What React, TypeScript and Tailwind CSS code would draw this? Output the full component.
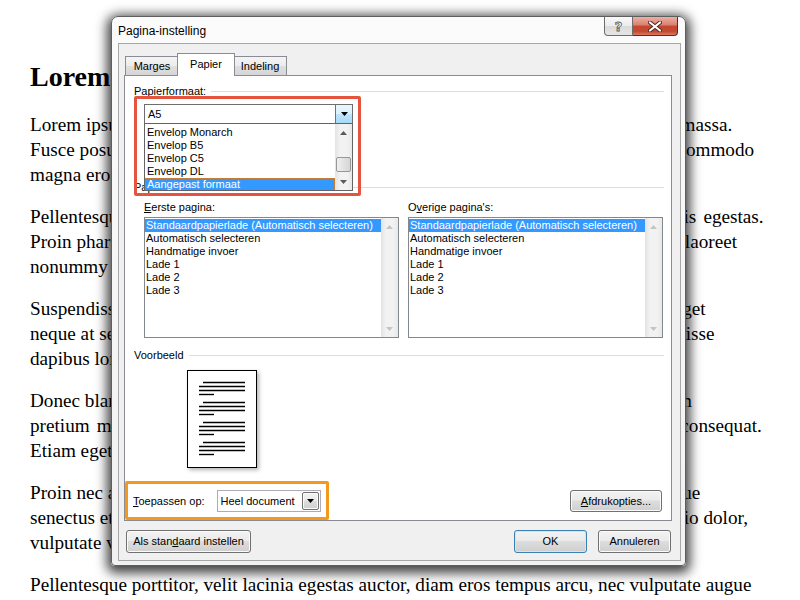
import React from "react";

// body text behind the dialog, one entry per rendered line
const paragraphs: string[][] = [
  [
    "Lorem ipsum dolor sit amet, consectetuer adipiscing elit. Maecenas porttitor congue massa.",
    "Fusce posuere, magna sed pulvinar ultricies, purus lectus malesuada libero, sit amet commodo",
    "magna eros quis urna.",
  ],
  [
    "Pellentesque habitant morbi tristique senectus et netus et malesuada fames ac turpis egestas.",
    "Proin pharetra nonummy pede. Mauris et orci. Aenean nec lorem. In porttitor. Donec laoreet",
    "nonummy augue.",
  ],
  [
    "Suspendisse dui purus, scelerisque at, vulputate vitae, pretium mattis, nunc. Mauris eget",
    "neque at sem venenatis eleifend. Ut nonummy. Fusce aliquet pede non pede. Suspendisse",
    "dapibus lorem pellentesque magna. Integer nulla.",
  ],
  [
    "Donec blandit feugiat ligula. Donec hendrerit, felis et imperdiet euismod, purus ipsum",
    "pretium metus, in lacinia nulla nisl eget sapien. Donec ut est in lectus consequat consequat.",
    "Etiam eget dui. Aliquam erat volutpat. Sed at lorem in nunc porta tristique.",
  ],
  [
    "Proin nec augue. Quisque aliquam tempor magna. Pellentesque habitant morbi tristique",
    "senectus et netus et malesuada fames ac turpis egestas. Nunc ac magna. Maecenas odio dolor,",
    "vulputate vel, auctor ac, accumsan id, felis. Pellentesque cursus sagittis felis.",
  ],
  ["Pellentesque porttitor, velit lacinia egestas auctor, diam eros tempus arcu, nec vulputate augue"],
];

// lines that run a little wider than the rest
const loose = new Set([paragraphs[1][0], paragraphs[3][1]]);

const formats = ["Envelop Monarch", "Envelop B5", "Envelop C5", "Envelop DL", "Aangepast formaat"];
const trays = [
  "Standaardpapierlade (Automatisch selecteren)",
  "Automatisch selecteren",
  "Handmatige invoer",
  "Lade 1",
  "Lade 2",
  "Lade 3",
];

const btnFace =
  "bg-[linear-gradient(#f2f2f2,#ebebeb_45%,#dddddd_50%,#cfcfcf)] shadow-[inset_0_0_0_1px_#fbfbfb]";

const Arrow = ({ up = false, color = "#000" }: { up?: boolean; color?: string }) => (
  <svg width="7" height="4" viewBox="0 0 7 4">
    <path d={up ? "M0 4h7L3.5 0z" : "M0 0h7L3.5 4z"} fill={color} />
  </svg>
);

const ScrollBar = ({ enabled }: { enabled?: boolean }) => (
  <div className="flex w-[17px] shrink-0 flex-col bg-[linear-gradient(90deg,#e3e3e3,#f2f2f2_30%,#f2f2f2_70%,#e8e8e8)]">
    <div className="flex h-[17px] items-center justify-center">
      <Arrow up color={enabled ? "#5a5a5a" : "#c4c4c4"} />
    </div>
    <div className="flex-1 px-px">
      {enabled && (
        <div className="mt-[16px] h-[15px] rounded-[2px] border border-[#979797] bg-[linear-gradient(90deg,#f0f0f0,#e2e2e2_50%,#d6d6d6)]" />
      )}
    </div>
    <div className="flex h-[17px] items-center justify-center">
      <Arrow color={enabled ? "#5a5a5a" : "#c4c4c4"} />
    </div>
  </div>
);

const GroupHeader = ({ children, className = "" }: { children: React.ReactNode; className?: string }) => (
  <div className={`flex items-center gap-[5px] pl-[9px] pr-[7px] ${className}`}>
    <span className="whitespace-nowrap">{children}</span>
    <div className="h-px flex-1 bg-[#d5dfe5]" />
  </div>
);

const TrayList = () => (
  <div className="flex h-[121px] w-[255px] border border-[#828790] bg-white">
    <div className="min-w-0 flex-1 overflow-hidden pt-px">
      {trays.map((t, i) => (
        <div
          key={t}
          className={`h-[13px] whitespace-nowrap pl-px leading-[13px] ${i === 0 ? "bg-[#3399ff] text-white" : ""}`}
        >
          {t}
        </div>
      ))}
    </div>
    <ScrollBar />
  </div>
);

const PagePreview = () => (
  <svg width="70" height="98" viewBox="0 0 70 98" className="shadow-[2px_2px_4px_rgba(0,0,0,0.3)]">
    <rect x="0.5" y="0.5" width="69" height="97" fill="#fff" stroke="#000" />
    {[12, 32, 52, 72].map((y) => (
      <g key={y} stroke="#000" strokeWidth="1.4">
        <line x1="16" x2="58" y1={y + 0.5} y2={y + 0.5} />
        <line x1="12" x2="58" y1={y + 4.5} y2={y + 4.5} />
        <line x1="12" x2="58" y1={y + 8.5} y2={y + 8.5} />
        <line x1="12" x2="27" y1={y + 12.5} y2={y + 12.5} />
      </g>
    ))}
  </svg>
);

const Tab = ({ label, active = false, className = "" }: { label: string; active?: boolean; className?: string }) =>
  active ? (
    <div className={`relative z-10 flex h-[23px] items-start justify-center border border-b-0 border-[#898c95] bg-white pt-[4px] ${className}`}>
      {label}
    </div>
  ) : (
    <div
      className={`flex h-[20px] items-center justify-center border border-[#898c95] bg-[linear-gradient(#f4f4f4,#ececec_50%,#dfdfdf_50%,#d6d6d6)] pt-px ${className}`}
    >
      {label}
    </div>
  );

function PageSetupDialog() {
  return (
    <div className="absolute left-[111px] top-[16px] flex h-[550px] w-[575px] flex-col rounded-t-[7px] rounded-b-[4px] border border-[#5e5e5e] bg-[linear-gradient(#fbfbfb,#f1f1f1)] font-['Liberation_Sans',sans-serif] text-[11px] leading-[13px] text-black shadow-[0_3px_12px_4px_rgba(0,0,0,0.75)]">
      {/* caption */}
      <div className="flex h-[26px] shrink-0 items-start">
        <span className="ml-[6px] mt-[8px] text-[12px]">Pagina-instelling</span>
        <div className="ml-auto mr-[7px] flex">
          <div className="flex h-[19px] w-[29px] items-center justify-center rounded-bl-[4px] border border-t-0 border-[#6d6d6d] bg-[linear-gradient(#f8f8f8,#ececec_50%,#dadada_50%,#e6e6e6)] font-['DejaVu_Sans',sans-serif] text-[13px] font-bold text-white [-webkit-text-stroke:0.8px_#555]">
            ?
          </div>
          <div className="flex h-[19px] w-[45px] items-center justify-center rounded-br-[4px] border border-l-0 border-t-0 border-[#5b2a22] bg-[linear-gradient(#eab0a4,#d9806f_45%,#c7472f_50%,#c24a33_80%,#dc7a5e)]">
            <svg width="14" height="11" viewBox="0 0 14 11">
              <path d="M2 1.5l10 8M12 1.5l-10 8" stroke="#4a2a25" strokeWidth="4" strokeLinecap="round" />
              <path d="M2 1.5l10 8M12 1.5l-10 8" stroke="#fff" strokeWidth="2.2" strokeLinecap="round" />
            </svg>
          </div>
        </div>
      </div>

      {/* client area */}
      <div className="mb-[4px] ml-[6px] mr-[4px] flex flex-1 flex-col border border-[#a7a7a7] bg-[#f0f0f0]">
        <div className="relative z-10 -mb-px mt-[9px] flex h-[23px] items-end pl-[6px]">
          <Tab label="Marges" className="w-[53px] border-r-0" />
          <Tab label="Papier" active className="-mx-px w-[58px]" />
          <Tab label="Indeling" className="w-[53px] border-l-0" />
        </div>

        <div className="ml-[5px] mr-[8px] flex flex-1 flex-col border border-[#898c95] bg-white">
          <GroupHeader className="mt-[9px]">
            Papier<u>f</u>ormaat:
          </GroupHeader>

          {/* paper size combo, opened */}
          <div className="relative z-20 mt-[6px] pl-[19px]">
            <div className="relative flex h-[20px] w-[209px] border border-[#6e6e6e] bg-white">
              <span className="flex-1 pl-[3px] leading-[18px]">A5</span>
              <div className="flex w-[17px] items-center justify-center border-l border-[#3c7fb1] bg-[linear-gradient(#eaf6fd,#d9f0fc_50%,#bee6fd_50%,#a7d9f5)]">
                <Arrow />
              </div>
              <div className="absolute left-[-1px] top-[18px] flex h-[68px] w-[209px] border border-[#646464] bg-white">
                <div className="min-w-0 flex-1 overflow-hidden pt-[2px]">
                  {formats.map((f, i) => (
                    <div
                      key={f}
                      className={`h-[13px] whitespace-nowrap pl-px leading-[11px] ${
                        i === formats.length - 1
                          ? "border border-dotted border-[#c8803a] bg-[#3399ff] text-white"
                          : "border border-transparent"
                      }`}
                    >
                      {f}
                    </div>
                  ))}
                </div>
                <ScrollBar enabled />
              </div>
            </div>
            <div className="pointer-events-none absolute left-[9px] top-[-8px] h-[100px] w-[227px] rounded-[2px] border-[3px] border-[#e5543f]" />
          </div>

          <GroupHeader className="mt-[57px]">Papierlade</GroupHeader>

          <div className="mt-[7px] flex gap-[9px] pl-[19px]">
            <span className="w-[255px]">
              <u>E</u>erste pagina:
            </span>
            <span className="w-[255px]">
              O<u>v</u>erige pagina's:
            </span>
          </div>
          <div className="mt-[3px] flex gap-[9px] pl-[19px]">
            <TrayList />
            <TrayList />
          </div>

          <GroupHeader className="mt-[11px]">Voorbeeld</GroupHeader>
          <div className="ml-[62px] mt-[8px]">
            <PagePreview />
          </div>

          {/* apply-to row */}
          <div className="relative mb-[8px] mt-auto flex h-[22px] items-center pl-[8px] pr-[9px]">
            <span className="whitespace-nowrap">
              <u>T</u>oepassen op:
            </span>
            <div className="ml-[12px] flex h-[22px] w-[104px] border border-[#abadb3] bg-white">
              <span className="flex-1 whitespace-nowrap pl-[3px] leading-[20px]">Heel document</span>
              <div className={`m-px flex w-[17px] items-center justify-center rounded-[2px] border border-[#707070] ${btnFace}`}>
                <Arrow />
              </div>
            </div>
            <button
              className={`ml-auto flex h-[22px] w-[92px] items-center justify-center rounded-[3px] border border-[#707070] ${btnFace}`}
            >
              <u>A</u>fdrukopties...
            </button>
            <div className="pointer-events-none absolute left-0 top-[-9px] h-[39px] w-[204px] rounded-[2px] border-[3px] border-[#f39a1e]" />
          </div>
        </div>

        <div className="mb-[7px] mt-[9px] flex h-[23px] pl-[7px] pr-[9px]">
          <button className={`flex w-[125px] items-center justify-center rounded-[3px] border border-[#707070] ${btnFace}`}>
            Als stan<u>d</u>aard instellen
          </button>
          <button className="ml-auto flex w-[73px] items-center justify-center rounded-[3px] border border-[#3c7fb1] bg-[linear-gradient(#f2f2f2,#ebebeb_45%,#dddddd_50%,#cfcfcf)] shadow-[inset_0_0_0_1px_#c9e8fb]">
            OK
          </button>
          <button className={`ml-[11px] flex w-[73px] items-center justify-center rounded-[3px] border border-[#707070] ${btnFace}`}>
            Annuleren
          </button>
        </div>
      </div>
    </div>
  );
}

export default function App() {
  return (
    <div className="relative h-[600px] w-[800px] overflow-hidden bg-white">
      <div className="pl-[30px] pt-[60px] font-['Liberation_Serif',serif] text-black">
        <h1 className="mb-[18px] text-[28px] font-bold leading-[34px]">Lorem ipsum</h1>
        {paragraphs.map((lines, i) => (
          <p key={i} className="mb-[17px] whitespace-nowrap text-[19.2px] leading-[25px]">
            {lines.map((l) => (
              <span key={l} className={`block ${loose.has(l) ? "[word-spacing:2.3px]" : ""}`}>
                {l}
              </span>
            ))}
          </p>
        ))}
      </div>
      <PageSetupDialog />
    </div>
  );
}
